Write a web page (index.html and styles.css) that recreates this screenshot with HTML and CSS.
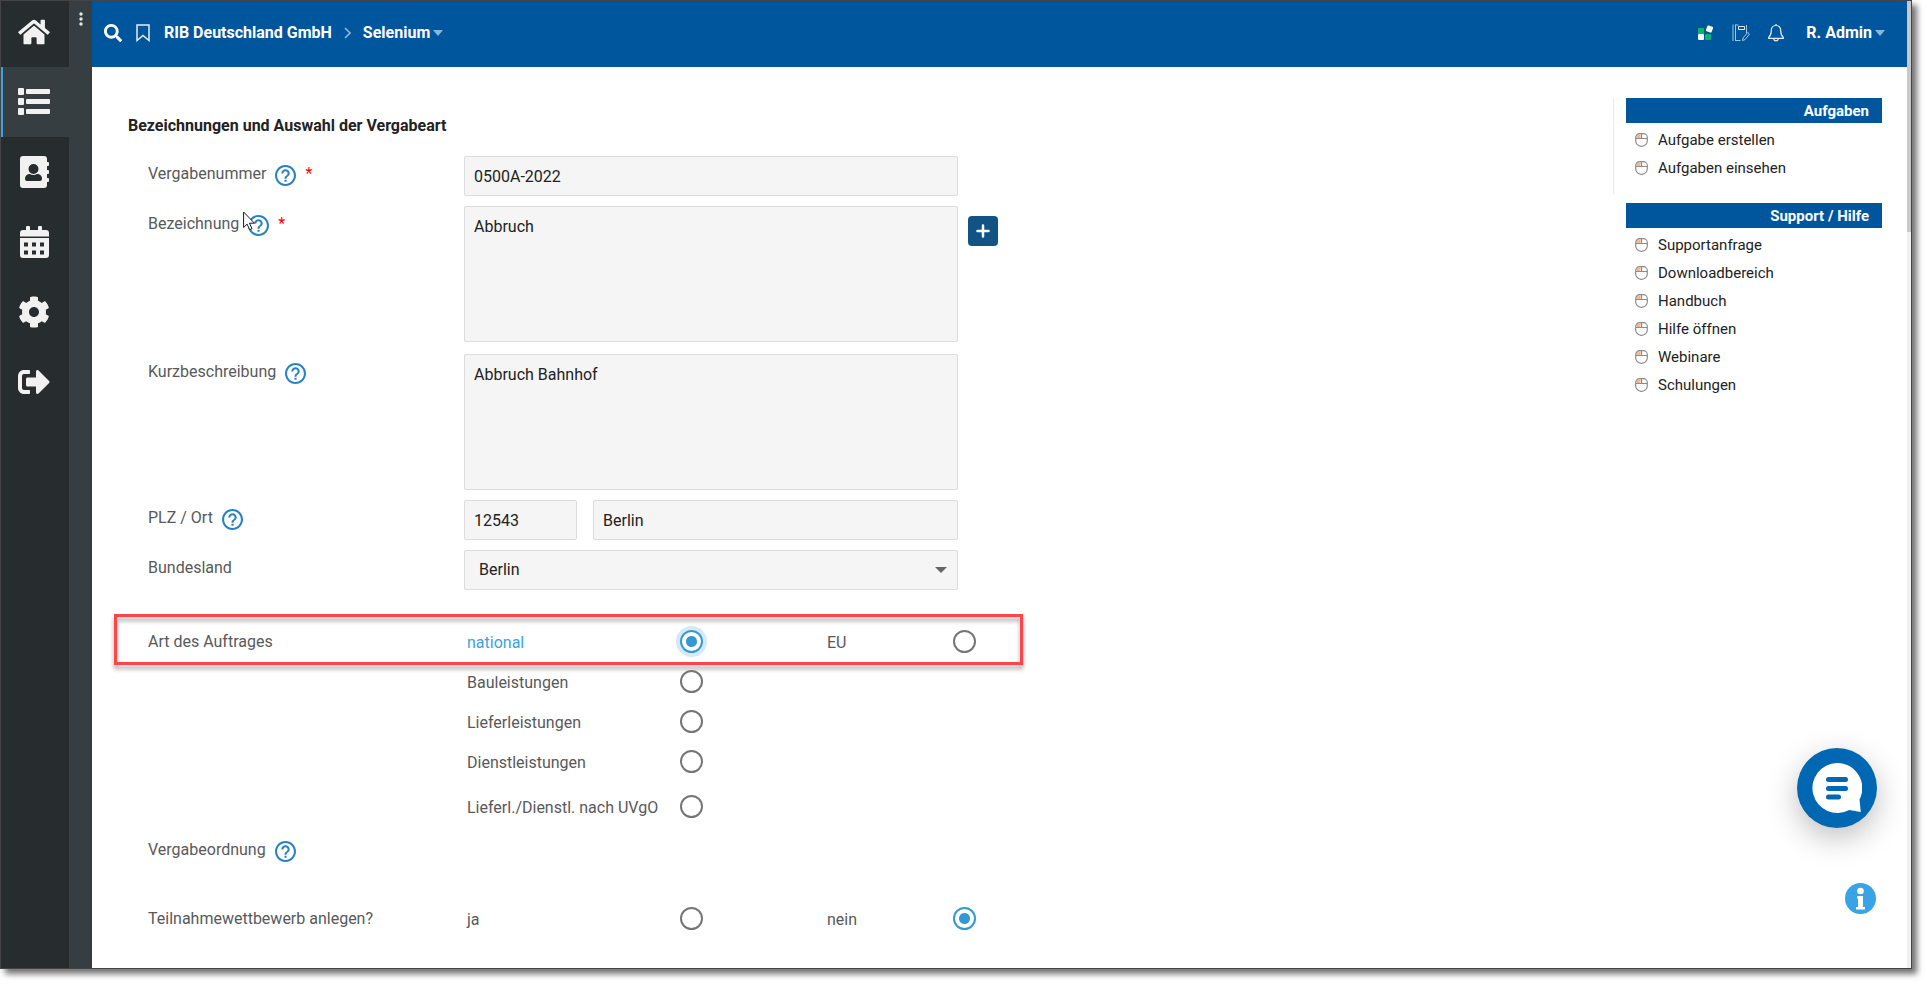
FILE: index.html
```html
<!DOCTYPE html>
<html lang="de">
<head>
<meta charset="utf-8">
<title>Bezeichnungen und Auswahl der Vergabeart</title>
<link rel="stylesheet" href="styles.css">
</head>
<body>
<svg class="defs" aria-hidden="true">
  <symbol id="help" viewBox="2 2 20 20"><path d="M11 18h2v-2h-2v2zm1-16C6.48 2 2 6.48 2 12s4.48 10 10 10 10-4.48 10-10S17.52 2 12 2zm0 18c-4.41 0-8-3.59-8-8s3.59-8 8-8 8 3.59 8 8-3.59 8-8 8zm0-14c-2.21 0-4 1.79-4 4h2c0-1.1.9-2 2-2s2 .9 2 2c0 2-3 1.75-3 5h2c0-2.25 3-2.5 3-5 0-2.21-1.79-4-4-4z"/></symbol>
  <symbol id="mouse" viewBox="0 0 13 14"><path d="M1.500 5V4A2.500 2.500 0 0 1 4 1.500h1.500V5z" fill="#ffb77c"/><path d="M.7 5.500V4.500A3.800 3.800 0 0 1 4.500.7h4a3.800 3.800 0 0 1 3.800 3.800v3.300a5.500 5.500 0 0 1-5.500 5.500h-.6A5.500 5.500 0 0 1 .7 7.800zM.7 5.500h11.600M6.500.7v4.800" fill="none" stroke="#8c8c8c" stroke-width="1.200"/></symbol>
</svg>
<div class="window">
  <nav class="sidebar" aria-label="Hauptmenü">
    <a class="nav-item nav-home" href="#" aria-label="Start"><svg width="32" height="28" viewBox="0 0 576 512"><path d="M280.37 148.26L96 300.11V464a16 16 0 0 0 16 16l112.06-.29a16 16 0 0 0 15.92-16V368a16 16 0 0 1 16-16h64a16 16 0 0 1 16 16v95.64a16 16 0 0 0 16 16.05L464 480a16 16 0 0 0 16-16V300L295.67 148.26a12.19 12.19 0 0 0-15.3 0zM571.6 251.47L488 182.56V44.05a12 12 0 0 0-12-12h-56a12 12 0 0 0-12 12v72.61L318.47 43a48 48 0 0 0-61 0L4.34 251.47a12 12 0 0 0-1.6 16.9l25.5 31A12 12 0 0 0 45.15 301l235.22-193.74a12.19 12.19 0 0 1 15.3 0L530.9 301a12 12 0 0 0 16.9-1.6l25.5-31a12 12 0 0 0-1.7-16.93z"/></svg></a>
    <a class="nav-item nav-active" href="#" aria-label="Liste"><svg width="32" height="28" viewBox="0 0 32 28"><rect x="0" y="0" width="6" height="7" rx="1"/><rect x="0" y="10" width="6" height="7" rx="1"/><rect x="0" y="20" width="6" height="7" rx="1"/><rect x="8" y="1" width="24" height="5" rx="1"/><rect x="8" y="11" width="24" height="5" rx="1"/><rect x="8" y="21" width="24" height="5" rx="1"/></svg></a>
    <a class="nav-item" href="#" aria-label="Kontakte"><svg width="29" height="32" viewBox="0 0 29 32"><path fill-rule="evenodd" d="M3 0h21a3 3 0 0 1 3 3v3h1a1 1 0 0 1 1 1v2a1 1 0 0 1-1 1h-1v4h1a1 1 0 0 1 1 1v2a1 1 0 0 1-1 1h-1v4h1a1 1 0 0 1 1 1v2a1 1 0 0 1-1 1h-1v3a3 3 0 0 1-3 3H3a3 3 0 0 1-3-3V3a3 3 0 0 1 3-3zM13.500 8a5 5 0 1 0 0 10 5 5 0 0 0 0-10zM10 18c-3 0-5 2-5 4.500V23a2 2 0 0 0 2 2h13a2 2 0 0 0 2-2v-.5C22 20 20 18 17 18c-1 .6-2.200 1-3.500 1s-2.500-.4-3.500-1z"/></svg></a>
    <a class="nav-item" href="#" aria-label="Kalender"><svg width="29" height="32" viewBox="0 0 29 32"><path fill-rule="evenodd" d="M3 4h3V1a1 1 0 0 1 1-1h2a1 1 0 0 1 1 1v3h8V1a1 1 0 0 1 1-1h2a1 1 0 0 1 1 1v3h4a3 3 0 0 1 3 3v3.500H0V7a3 3 0 0 1 3-3zM0 12h29v17a3 3 0 0 1-3 3H3a3 3 0 0 1-3-3zm4 4.500v4h4v-4zm8 0v4h4v-4zm8 0v4h4v-4zm-16 8v4h4v-4zm8 0v4h4v-4zm8 0v4h4v-4z"/></svg></a>
    <a class="nav-item" href="#" aria-label="Einstellungen"><svg width="32" height="32" viewBox="0 0 512 512"><path d="M487.4 315.7l-42.6-24.6c4.3-23.2 4.3-47 0-70.2l42.6-24.6c4.9-2.8 7.1-8.6 5.5-14-11.1-35.6-30-67.8-54.7-94.6-3.8-4.1-10-5.1-14.8-2.3L380.8 110c-17.9-15.4-38.500-27.3-60.8-35.1V25.8c0-5.6-3.9-10.5-9.4-11.7-36.7-8.2-74.3-7.8-109.200 0-5.5 1.2-9.4 6.1-9.4 11.7V75c-22.2 7.9-42.8 19.8-60.8 35.1L88.7 85.5c-4.9-2.8-11-1.9-14.800 2.3-24.7 26.7-43.6 58.9-54.7 94.6-1.7 5.4.6 11.2 5.5 14L67.3 221c-4.3 23.2-4.3 47 0 70.2l-42.6 24.6c-4.9 2.8-7.1 8.6-5.5 14 11.1 35.6 30 67.8 54.7 94.6 3.8 4.1 10 5.1 14.8 2.3l42.6-24.6c17.9 15.4 38.5 27.3 60.8 35.1v49.2c0 5.6 3.9 10.5 9.4 11.7 36.7 8.2 74.3 7.8 109.2 0 5.5-1.2 9.4-6.1 9.4-11.7v-49.2c22.2-7.9 42.8-19.8 60.8-35.1l42.6 24.6c4.9 2.8 11 1.9 14.8-2.3 24.7-26.7 43.6-58.9 54.7-94.6 1.5-5.5-.7-11.3-5.6-14.1zM256 336c-44.1 0-80-35.9-80-80s35.9-80 80-80 80 35.9 80 80-35.9 80-80 80z"/></svg></a>
    <a class="nav-item" href="#" aria-label="Abmelden"><svg width="32" height="32" viewBox="0 0 512 512"><path d="M497 273L329 441c-15 15-41 4.5-41-17v-96H152c-13.3 0-24-10.7-24-24v-96c0-13.3 10.7-24 24-24h136V88c0-21.4 25.9-32 41-17l168 168c9.3 9.4 9.3 24.6 0 34zM192 436v-40c0-6.6-5.4-12-12-12H96c-17.7 0-32-14.3-32-32V160c0-17.7 14.3-32 32-32h84c6.6 0 12-5.4 12-12V76c0-6.6-5.4-12-12-12H96c-53 0-96 43-96 96v192c0 53 43 96 96 96h84c6.6 0 12-5.4 12-12z"/></svg></a>
  </nav>
  <div class="rail">
    <button class="rail-button" type="button" aria-label="Menü öffnen"><svg width="4" height="14" viewBox="0 0 4 14"><circle cx="2" cy="2" r="1.700"/><circle cx="2" cy="7" r="1.700"/><circle cx="2" cy="12" r="1.700"/></svg></button>
  </div>
  <div class="page">
    <header class="topbar">
      <button class="icon-button" type="button" aria-label="Suchen"><svg width="18" height="18" viewBox="0 0 512 512" fill="#fff"><path d="M505 442.7L405.3 343c-4.5-4.5-10.6-7-17-7H372c27.6-35.3 44-79.7 44-128C416 93.1 322.9 0 208 0S0 93.1 0 208s93.1 208 208 208c48.3 0 92.700-16.4 128-44v16.3c0 6.4 2.5 12.5 7 17l99.7 99.7c9.4 9.4 24.6 9.4 33.9 0l28.3-28.3c9.4-9.4 9.4-24.6.1-34zM208 336c-70.7 0-128-57.2-128-128 0-70.7 57.2-128 128-128 70.7 0 128 57.2 128 128 0 70.7-57.2 128-128 128z"/></svg></button>
      <button class="icon-button bookmark" type="button" aria-label="Lesezeichen"><svg width="14" height="18" viewBox="0 0 14 18" fill="none" stroke="#e3edf6" stroke-width="1.500"><path d="M1 1h12v15.500l-6-5-6 5z"/></svg></button>
      <a class="crumb" href="#">RIB Deutschland GmbH</a>
      <svg class="chevron" width="7" height="12" viewBox="0 0 7 12" fill="none" stroke="#8fb5d6" stroke-width="1.600"><path d="M1 1l5 5-5 5"/></svg>
      <button class="crumb crumb-menu" type="button">Selenium<span class="caret"></span></button>
      <div class="tools">
        <button class="icon-button" type="button" aria-label="Anwendungen"><svg width="16" height="16" viewBox="0 0 16 16"><rect x="0" y="3" width="6" height="6" fill="#0db56a"/><rect x="0" y="9" width="6" height="6" rx="1" fill="#fff"/><rect x="7" y="9" width="6" height="6" rx="1" fill="#0db56a"/><rect x="8.500" y="1" width="6" height="6" rx="1" fill="#fff" transform="rotate(20 11.500 4)"/></svg></button>
        <button class="icon-button" type="button" aria-label="Notizen"><svg width="18" height="18" viewBox="0 0 18 18" fill="none" stroke="#a9c6e0"><path d="M1 .5v16.500M3.500 .5v16.500M3.500 1h3M14.500 1v8M3.500 16.500h5"/><path d="M6.500 2.500h6v3h-6z" stroke="#dfeaf4"/><path d="M10.500 16.500l.6-2.600L15.700 8.500l1.800 1.600-4.500 5.500z"/></svg></button>
        <button class="icon-button" type="button" aria-label="Benachrichtigungen"><svg width="16" height="18" viewBox="0 0 16 18" fill="none" stroke="#e3edf6" stroke-width="1.200"><path d="M8 1.500c-3 0-4.700 2.200-4.700 5 0 4-1 5.500-2.600 7v.8h14.600v-.8c-1.600-1.500-2.600-3-2.600-7 0-2.800-1.700-5-4.700-5zM8 0v1.500M5.800 14.500c0 1.400 1 2.300 2.200 2.300s2.200-.9 2.200-2.300"/></svg></button>
        <button class="crumb crumb-menu user" type="button">R. Admin<span class="caret"></span></button>
      </div>
    </header>
    <div class="content">
      <main class="main">
        <h1 class="title">Bezeichnungen und Auswahl der Vergabeart</h1>
        <form class="form">
          <div class="row">
            <div class="label"><label for="nummer">Vergabenummer</label><svg class="help"><use href="#help"/></svg><span class="required">*</span></div>
            <input class="field" id="nummer" type="text" value="0500A-2022">
          </div>
          <div class="row spaced">
            <div class="label"><label for="bezeichnung">Bezeichnung</label><svg class="help"><use href="#help"/></svg><span class="required">*</span>
              <svg class="pointer" width="13" height="20" viewBox="0 0 13 20"><path d="M.6 1v15.500l3.500-3.400 2.500 5.600 2.400-1-2.500-5.500h5z" fill="#fff" stroke="#111827"/></svg>
            </div>
            <textarea class="field area" id="bezeichnung">Abbruch</textarea>
            <button class="add" type="button" aria-label="Hinzufügen"><svg width="14" height="14" viewBox="0 0 14 14" stroke="#fff" stroke-width="2.500" stroke-linecap="round"><path d="M7 1.500v11M1.500 7h11"/></svg></button>
          </div>
          <div class="row">
            <div class="label"><label for="kurz">Kurzbeschreibung</label><svg class="help"><use href="#help"/></svg></div>
            <textarea class="field area" id="kurz">Abbruch Bahnhof</textarea>
          </div>
          <div class="row">
            <div class="label"><label for="plz">PLZ / Ort</label><svg class="help"><use href="#help"/></svg></div>
            <div class="pair">
              <input class="field" id="plz" type="text" value="12543">
              <input class="field" type="text" value="Berlin" aria-label="Ort">
            </div>
          </div>
          <div class="row">
            <div class="label"><label for="land">Bundesland</label></div>
            <div class="select"><select class="field" id="land"><option>Berlin</option></select></div>
          </div>
          <div class="choices">
            <div class="choice highlight">
              <span class="choice-label">Art des Auftrages</span>
              <label class="option selected" for="national">national</label><input class="radio focused" type="radio" id="national" name="art" checked>
              <label class="option second" for="eu">EU</label><input class="radio" type="radio" id="eu" name="art">
            </div>
            <div class="choice"><label class="option" for="bau">Bauleistungen</label><input class="radio" type="radio" id="bau" name="leistung"></div>
            <div class="choice"><label class="option" for="liefer">Lieferleistungen</label><input class="radio" type="radio" id="liefer" name="leistung"></div>
            <div class="choice"><label class="option" for="dienst">Dienstleistungen</label><input class="radio" type="radio" id="dienst" name="leistung"></div>
            <div class="choice tall"><label class="option" for="uvgo">Lieferl./Dienstl. nach UVgO</label><input class="radio" type="radio" id="uvgo" name="leistung"></div>
          </div>
          <div class="row order">
            <div class="label"><span>Vergabeordnung</span><svg class="help"><use href="#help"/></svg></div>
          </div>
          <div class="choice">
            <span class="choice-label">Teilnahmewettbewerb anlegen?</span>
            <label class="option" for="ja">ja</label><input class="radio" type="radio" id="ja" name="teilnahme">
            <label class="option second" for="nein">nein</label><input class="radio" type="radio" id="nein" name="teilnahme" checked>
          </div>
        </form>
      </main>
      <aside class="aside">
        <section class="panel divided">
          <h2 class="panel-title">Aufgaben</h2>
          <ul class="links">
            <li><a class="link" href="#"><svg class="mouse"><use href="#mouse"/></svg>Aufgabe erstellen</a></li>
            <li><a class="link" href="#"><svg class="mouse"><use href="#mouse"/></svg>Aufgaben einsehen</a></li>
          </ul>
        </section>
        <section class="panel">
          <h2 class="panel-title">Support / Hilfe</h2>
          <ul class="links">
            <li><a class="link" href="#"><svg class="mouse"><use href="#mouse"/></svg>Supportanfrage</a></li>
            <li><a class="link" href="#"><svg class="mouse"><use href="#mouse"/></svg>Downloadbereich</a></li>
            <li><a class="link" href="#"><svg class="mouse"><use href="#mouse"/></svg>Handbuch</a></li>
            <li><a class="link" href="#"><svg class="mouse"><use href="#mouse"/></svg>Hilfe öffnen</a></li>
            <li><a class="link" href="#"><svg class="mouse"><use href="#mouse"/></svg>Webinare</a></li>
            <li><a class="link" href="#"><svg class="mouse"><use href="#mouse"/></svg>Schulungen</a></li>
          </ul>
        </section>
      </aside>
    </div>
  </div>
  <div class="scrollbar"><div class="thumb"></div></div>
  <button class="chat" type="button" aria-label="Chat"><svg width="50" height="50" viewBox="0 0 50 50"><path d="M25 0a25 25 0 0 1 22.500 36.500l1.300 12.500-11.500-2A25 25 0 1 1 25 0z" fill="#fff"/><path d="M16.500 16.500h17M16.500 25.500h17M16.500 34h10" stroke="#0067b3" stroke-width="5" stroke-linecap="round"/></svg></button>
  <button class="info" type="button" aria-label="Information"><svg width="31" height="31" viewBox="0 0 31 31"><circle cx="15.500" cy="15.500" r="15.500" fill="#38a4e6"/><circle cx="15.500" cy="8" r="3.300" fill="#fff"/><path d="M12 13h6v11h2v2.500h-9V24h2v-8.500h-1z" fill="#fff"/></svg></button>
</div>
</body>
</html>
```

FILE: styles.css
```css
* { box-sizing: border-box; }

body {
  margin: 0;
  min-height: 100vh;
  display: flex;
  padding: 0 15px 15px 0;
  overflow: hidden;
  background: #fff;
  color: #222;
  font: 16px/20px Roboto, "Liberation Sans", sans-serif;
}

button, input, textarea, select { font: inherit; color: inherit; }
button { border: 0; padding: 0; background: none; }
a { color: inherit; text-decoration: none; }
svg { display: block; flex: none; }
.defs { position: absolute; width: 0; height: 0; }

.window {
  position: relative;
  flex: 1;
  display: flex;
  border: 1px solid #444;
  box-shadow: 5px 5px 6px rgba(0, 0, 0, .55);
}

/* Navigation */
.sidebar { width: 68px; background: #272c2e; }
.nav-item {
  display: flex;
  align-items: center;
  justify-content: center;
  height: 70px;
  padding-right: 2px;
  fill: #f1f1f1;
}
.nav-home { height: 66px; padding-bottom: 4px; }
.nav-active { background: #363e41; border-left: 2px solid #38a4e6; padding-right: 4px; }
.rail { width: 23px; background: #363e41; }
.rail-button { display: flex; justify-content: center; width: 100%; padding-top: 11px; fill: #e6e6e6; }

.page { flex: 1; min-width: 0; }

.topbar {
  display: flex;
  align-items: center;
  height: 66px;
  padding: 0 22px 2px 12px;
  background: #00569d;
  color: #fff;
}
.bookmark { margin: 0 14px; }
.crumb { font-weight: 700; }
.chevron { margin: 0 12px; }
.crumb-menu { display: flex; align-items: center; gap: 3px; }
.caret { border: 5px solid transparent; border-top: 6px solid #8fb5d6; border-bottom: 0; }
.tools { display: flex; align-items: center; gap: 18px; margin-left: auto; }
.user { margin-left: 4px; }

.content { display: flex; justify-content: space-between; padding: 31px 25px 28px 36px; }

/* Form */
.title { margin: 18px 0 20px; font-size: 16px; line-height: 20px; font-weight: 700; }
.form { padding-left: 20px; color: #58595b; }
.row { display: flex; align-items: flex-start; margin-bottom: 10px; }
.spaced { margin-bottom: 12px; }
.label { position: relative; display: flex; gap: 9px; width: 316px; padding-top: 8px; }
.help { width: 21px; height: 21px; margin-top: 1px; fill: #2782c4; }
.required { color: #f00; }
.pointer { position: absolute; left: 95px; top: 5px; }
.field {
  display: block;
  width: 494px;
  height: 40px;
  margin: 0;
  padding: 0 9px;
  border: 1px solid #dcdcdc;
  border-radius: 2px;
  background: #f5f5f5;
  color: #222;
}
.area { height: 136px; padding: 10px 9px; resize: none; }
.add {
  display: flex;
  align-items: center;
  justify-content: center;
  width: 30px;
  height: 30px;
  margin: 10px 0 0 10px;
  border-radius: 4px;
  background: #115385;
}
.pair { display: grid; grid-template-columns: 113px 365px; gap: 16px; }
.pair .field { width: 100%; }
.select { position: relative; }
.select .field { appearance: none; padding-left: 14px; }
.select::after {
  content: "";
  position: absolute;
  right: 11px;
  top: 17px;
  border: 6px solid transparent;
  border-top-color: #666;
  border-bottom: 0;
}

.choices { margin-top: 32px; }
.choice {
  position: relative;
  display: grid;
  grid-template-columns: 316px 216px 24px 120px 129px 24px;
  align-items: center;
  width: 829px;
  height: 40px;
}
.tall { height: 50px; }
.choice-label { grid-column: 1; }
.option { grid-column: 2; padding: 2px 0 0 3px; }
.second { grid-column: 5; }
.selected { color: #38a4e6; }
.radio {
  appearance: none;
  width: 23px;
  height: 23px;
  margin: 0 0 2px;
  border: 2px solid #767676;
  border-radius: 50%;
  background: #fff;
}
.radio:checked {
  border-color: #3399d0;
  background: radial-gradient(circle, #3399d0 5px, #fff 6px);
}
.focused { box-shadow: 0 0 0 4px #d6eaf5; }
.highlight::after {
  content: "";
  position: absolute;
  inset: -8px -46px -3px -34px;
  border: 3px solid #ff4545;
  filter: drop-shadow(0 4px 2px rgba(0, 0, 0, .35));
  pointer-events: none;
}
.order { margin-bottom: 37px; }

/* Side panels */
.aside { width: 269px; }
.panel { padding-left: 13px; margin-bottom: 9px; }
.divided { padding-bottom: 12px; border-left: 1px solid #ebebeb; padding-left: 12px; }
.panel-title {
  margin: 0 0 3px;
  padding: 1px 13px 0 0;
  background: #00569d;
  color: #fff;
  font-size: 15px;
  line-height: 24px;
  font-weight: 700;
  text-align: right;
}
.links { margin: 0; padding: 0 0 0 9px; list-style: none; }
.link { display: flex; align-items: center; gap: 10px; font-size: 15px; line-height: 28px; }
.mouse { width: 13px; height: 14px; }

.scrollbar { width: 4px; background: #f0f0f0; }
.thumb { height: 231px; background: #c8c8c8; }

/* Floating buttons */
.chat {
  position: absolute;
  right: 34px;
  bottom: 140px;
  display: flex;
  align-items: center;
  justify-content: center;
  width: 80px;
  height: 80px;
  border-radius: 50%;
  background: #0067b3;
  box-shadow: 0 10px 30px rgba(0, 0, 0, .25);
}
.info { position: absolute; right: 35px; bottom: 54px; }
```
